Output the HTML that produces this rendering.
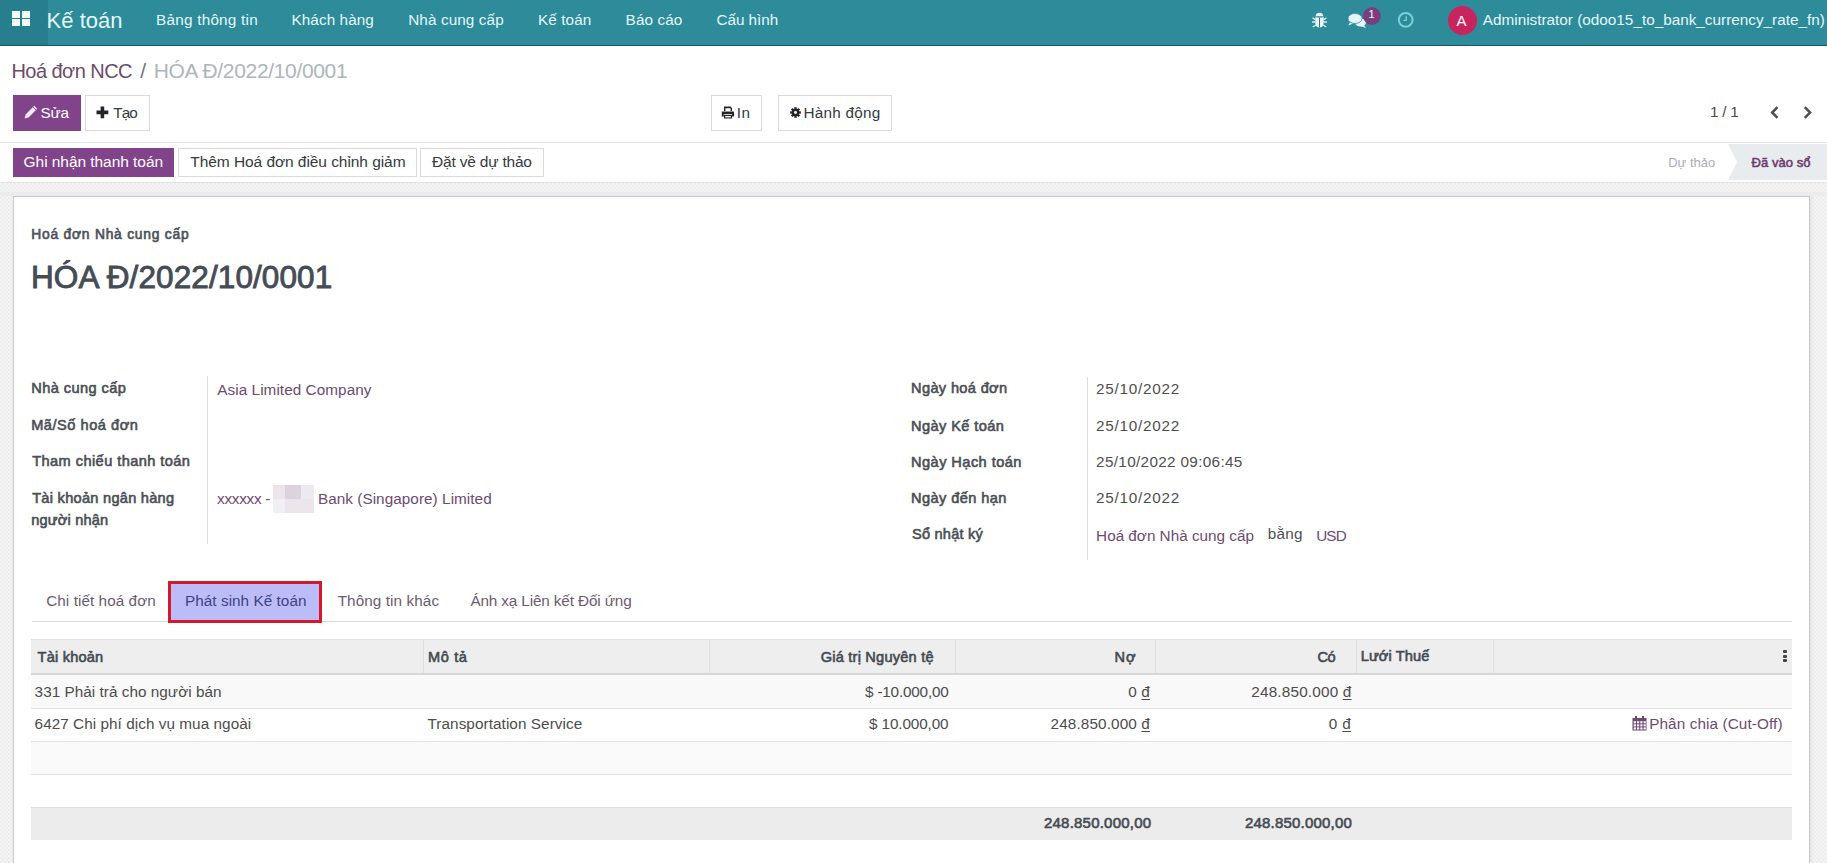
<!DOCTYPE html><html><head><meta charset='utf-8'><title>Odoo</title><style>
*{box-sizing:border-box}
html,body{margin:0;padding:0;width:1827px;height:863px;overflow:hidden;background:#fff;font-family:'Liberation Sans',sans-serif}
.t{position:absolute;white-space:nowrap;line-height:1;font-family:'Liberation Sans',sans-serif}
.r{position:absolute}
.t u{text-decoration:underline;text-underline-offset:2px}
</style></head><body><div class='r' style='left:0px;top:0px;width:1827px;height:45px;background:#2d8b9a'></div>
<div class='r' style='left:0px;top:45px;width:1827px;height:1px;background:#1d5660'></div>
<div class='r' style='left:0px;top:0px;width:48px;height:45px;background:#277f8e'></div>
<div class='r' style='left:12px;top:11px;width:8px;height:7px;background:#f2fbfc'></div>
<div class='r' style='left:22px;top:11px;width:8px;height:7px;background:#f2fbfc'></div>
<div class='r' style='left:12px;top:19px;width:8px;height:7px;background:#f2fbfc'></div>
<div class='r' style='left:22px;top:19px;width:8px;height:7px;background:#f2fbfc'></div>
<svg class='r' style='left:1311px;top:12px' width='17' height='17' viewBox='0 0 17 17'>
<g fill='#e6f6f8'><path d='M4.6 4.6 A3.9 3.9 0 0 1 12.4 4.6 Z'/><path d='M4.3 5.3 H12.7 V11 A4.2 4.6 0 0 1 4.3 11 Z'/>
<path d='M1 9.3 H4.5 V10.7 H1Z'/><path d='M16 9.3 H12.5 V10.7 H16Z'/>
<path d='M1.8 5.2 L4.8 7.3 L4.2 8.4 L1.2 6.3Z'/><path d='M15.2 5.2 L12.2 7.3 L12.8 8.4 L15.8 6.3Z'/>
<path d='M1.4 14.6 L4.6 12.6 L5 13.7 L2 15.6Z'/><path d='M15.6 14.6 L12.4 12.6 L12 13.7 L15 15.6Z'/></g>
<rect x='8.05' y='5.6' width='0.9' height='9.8' fill='#35606a'/><rect x='5.5' y='4.6' width='6' height='0.7' fill='#35606a'/></svg>
<svg class='r' style='left:1347px;top:12px' width='21' height='17' viewBox='0 0 21 17'>
<g fill='#e6f6f8'><ellipse cx='8' cy='6.5' rx='7' ry='5'/><path d='M3 10 L1.5 13.5 L7 11Z'/>
<ellipse cx='13.5' cy='10.5' rx='5.5' ry='4'/><path d='M17 13 L19 16 L13.5 14Z'/></g>
<ellipse cx='8' cy='6.5' rx='7' ry='5' fill='#e6f6f8' stroke='#2d8b9a' stroke-width='0.8'/></svg>
<div class='r' style='left:1363px;top:6.5px;width:18px;height:18px;background:#7a3e80;border-radius:50%'></div>
<span class='t' style='left:1368.5px;top:8.5px;font-size:11px;color:#fff'>1</span>
<svg class='r' style='left:1396px;top:10px' width='20' height='20' viewBox='0 0 20 20'>
<circle cx='9.7' cy='9.8' r='6.9' fill='none' stroke='#7ccfd8' stroke-width='2'/>
<path d='M10.2 6.2 V10.4 H7.6' fill='none' stroke='#7ccfd8' stroke-width='1.3'/></svg>
<div class='r' style='left:1448px;top:5.5px;width:29px;height:29px;background:#c8245e;border-radius:50%'></div>
<span class='t' style='left:1456.5px;top:13px;font-size:15px;color:#fff'>A</span>
<div class='r' style='left:13px;top:95px;width:68px;height:36px;background:#81438a'></div>
<div class='r' style='left:85px;top:95px;width:65px;height:36px;background:#fff;border:1px solid #dadada'></div>
<div class='r' style='left:711px;top:95px;width:51px;height:36px;background:#fff;border:1px solid #dadada'></div>
<div class='r' style='left:778px;top:95px;width:114px;height:36px;background:#fff;border:1px solid #dadada'></div>
<svg class='r' style='left:23px;top:104px' width='16' height='16' viewBox='0 0 16 16'>
<path d='M11.2 1.8 L14.2 4.8 L5.6 13.4 L1.6 14.4 L2.6 10.4 Z' fill='#f3e9f3'/>
<path d='M10 3 L13 6' stroke='#81438a' stroke-width='0.9'/></svg>
<svg class='r' style='left:96px;top:106px' width='13' height='13' viewBox='0 0 13 13'>
<path d='M4.6 0.5 H8.2 V4.6 H12.3 V8.2 H8.2 V12.3 H4.6 V8.2 H0.5 V4.6 H4.6Z' fill='#212529'/></svg>
<svg class='r' style='left:721px;top:106px' width='14' height='13' viewBox='0 0 14 13'>
<g fill='#212529'><path d='M3 0.5 H9.5 L11 2 V5 H9.6 V2.2 H4.4 V5 H3Z'/><path d='M0.8 5.5 H13 V10.5 H11 V8 H2.8 V10.5 H0.8Z'/>
<rect x='3' y='8.8' width='8' height='3.7'/></g><rect x='4.2' y='10' width='5.6' height='1.4' fill='#fff'/></svg>
<svg class='r' style='left:789.5px;top:107px' width='11' height='11' viewBox='0 0 12 12'>
<g transform='translate(6,6)' fill='#212529'>
<circle r='4'/><rect x='-1.3' y='-5.8' width='2.6' height='3' transform='rotate(0)'/><rect x='-1.3' y='-5.8' width='2.6' height='3' transform='rotate(45)'/><rect x='-1.3' y='-5.8' width='2.6' height='3' transform='rotate(90)'/><rect x='-1.3' y='-5.8' width='2.6' height='3' transform='rotate(135)'/><rect x='-1.3' y='-5.8' width='2.6' height='3' transform='rotate(180)'/><rect x='-1.3' y='-5.8' width='2.6' height='3' transform='rotate(225)'/><rect x='-1.3' y='-5.8' width='2.6' height='3' transform='rotate(270)'/><rect x='-1.3' y='-5.8' width='2.6' height='3' transform='rotate(315)'/></g><circle cx='6' cy='6' r='1.6' fill='#fff'/></svg>
<svg class='r' style='left:1768px;top:104px' width='14' height='17' viewBox='0 0 14 17'>
<path d='M9.5 3.2 L4.2 8.5 L9.5 13.8' fill='none' stroke='#4f4f4f' stroke-width='2.5'/></svg>
<svg class='r' style='left:1801px;top:104px' width='14' height='17' viewBox='0 0 14 17'>
<path d='M3.8 3.2 L9.1 8.5 L3.8 13.8' fill='none' stroke='#4f4f4f' stroke-width='2.5'/></svg>
<div class='r' style='left:0px;top:142px;width:1827px;height:1px;background:#dfe3e6'></div>
<div class='r' style='left:0px;top:182px;width:1827px;height:1px;background:#dfe3e6'></div>
<div class='r' style='left:13px;top:148px;width:161px;height:29px;background:#81438a'></div>
<div class='r' style='left:178px;top:148px;width:239px;height:29px;background:#fff;border:1px solid #dadada'></div>
<div class='r' style='left:420px;top:148px;width:124px;height:29px;background:#fff;border:1px solid #dadada'></div>
<svg class='r' style='left:1700px;top:143px' width='127' height='39' viewBox='0 0 127 39'>
<path d='M28 1 H127 V37 H28 L37 19 Z' fill='#e9ecef'/></svg>
<div class='r' style='left:0px;top:183px;width:1827px;height:680px;background-color:#f0f0f1;background-image:repeating-conic-gradient(#ececed 0 25%,#f5f5f6 0 50%);background-size:4px 4px'></div>
<div class='r' style='left:0px;top:192px;width:1827px;height:4px;background:#ececee'></div>
<div class='r' style='left:13px;top:196px;width:1797px;height:700px;background:#fff;border:1px solid #c9c9cb;box-shadow:3px 0 2px rgba(0,0,0,0.035)'></div>
<div class='r' style='left:207px;top:376px;width:1px;height:168px;background:#dcdcdc'></div>
<div class='r' style='left:1087px;top:377px;width:1px;height:183px;background:#dcdcdc'></div>
<div class='r' style='left:273px;top:485px;width:41px;height:28px;background:#ece6ec'>
<div class='r' style='left:12px;top:0;width:16px;height:14px;background:#ddd2de'></div>
<div class='r' style='left:0;top:14px;width:12px;height:14px;background:#f2eff2'></div>
<div class='r' style='left:28px;top:0;width:13px;height:14px;background:#eee9ee'></div>
</div>
<div class='r' style='left:32px;top:621px;width:1760px;height:1px;background:#dadada'></div>
<div class='r' style='left:168px;top:581px;width:154px;height:42px;background:#bcbcf8;border:3px solid #d5192b'></div>
<div class='r' style='left:31px;top:639px;width:1761px;height:36px;background:#eeeeee;border-top:1px solid #e2e2e2;border-bottom:2px solid #d7d7d7'></div>
<div class='r' style='left:422.5px;top:640px;width:1px;height:33px;background:#e0e0e0'></div>
<div class='r' style='left:709px;top:640px;width:1px;height:33px;background:#e0e0e0'></div>
<div class='r' style='left:954.5px;top:640px;width:1px;height:33px;background:#e0e0e0'></div>
<div class='r' style='left:1155px;top:640px;width:1px;height:33px;background:#e0e0e0'></div>
<div class='r' style='left:1356px;top:640px;width:1px;height:33px;background:#e0e0e0'></div>
<div class='r' style='left:1492.5px;top:640px;width:1px;height:33px;background:#e0e0e0'></div>
<div class='r' style='left:31px;top:675px;width:1761px;height:33px;background:#f9f9f9'></div>
<div class='r' style='left:31px;top:708px;width:1761px;height:1px;background:#e1e1e1'></div>
<div class='r' style='left:31px;top:741px;width:1761px;height:1px;background:#e1e1e1'></div>
<div class='r' style='left:31px;top:742px;width:1761px;height:32px;background:#fafafa'></div>
<div class='r' style='left:31px;top:774px;width:1761px;height:1px;background:#e1e1e1'></div>
<div class='r' style='left:31px;top:807px;width:1761px;height:33px;background:#ececec;border-top:1px solid #dcdcdc'></div>
<div class='r' style='left:1783px;top:650px;width:3.5px;height:3px;background:#3f444a;border-radius:1px'></div>
<div class='r' style='left:1783px;top:654.5px;width:3.5px;height:3px;background:#3f444a;border-radius:1px'></div>
<div class='r' style='left:1783px;top:659px;width:3.5px;height:3px;background:#3f444a;border-radius:1px'></div>
<svg class='r' style='left:1632px;top:716px' width='15' height='15' viewBox='0 0 15 15'>
<g fill='#6d4a72'><rect x='0.5' y='2' width='14' height='12.5'/></g>
<g fill='#fff'><rect x='1.7' y='5.2' width='2.2' height='2.1'/><rect x='5.0' y='5.2' width='2.2' height='2.1'/><rect x='8.3' y='5.2' width='2.2' height='2.1'/><rect x='11.6' y='5.2' width='2.2' height='2.1'/><rect x='1.7' y='8.3' width='2.2' height='2.1'/><rect x='5.0' y='8.3' width='2.2' height='2.1'/><rect x='8.3' y='8.3' width='2.2' height='2.1'/><rect x='11.6' y='8.3' width='2.2' height='2.1'/><rect x='1.7' y='11.4' width='2.2' height='2.1'/><rect x='5.0' y='11.4' width='2.2' height='2.1'/><rect x='8.3' y='11.4' width='2.2' height='2.1'/><rect x='11.6' y='11.4' width='2.2' height='2.1'/></g><g fill='#6d4a72'><rect x='3' y='0' width='2' height='3.5'/><rect x='10' y='0' width='2' height='3.5'/></g></svg>
<span class='t' style='left:46.60px;top:10.10px;font-size:22px;font-weight:400;color:#e4f7f9;letter-spacing:0.017px;'>Kế toán</span>
<span class='t' style='left:156.10px;top:11.89px;font-size:15.3px;font-weight:400;color:#e4f7f9;letter-spacing:0.223px;'>Bảng thông tin</span>
<span class='t' style='left:291.50px;top:11.89px;font-size:15.3px;font-weight:400;color:#e4f7f9;letter-spacing:0.078px;'>Khách hàng</span>
<span class='t' style='left:408.20px;top:11.89px;font-size:15.3px;font-weight:400;color:#e4f7f9;letter-spacing:0.100px;'>Nhà cung cấp</span>
<span class='t' style='left:538.00px;top:11.89px;font-size:15.3px;font-weight:400;color:#e4f7f9;letter-spacing:0.083px;'>Kế toán</span>
<span class='t' style='left:625.60px;top:11.89px;font-size:15.3px;font-weight:400;color:#e4f7f9;letter-spacing:0.100px;'>Báo cáo</span>
<span class='t' style='left:716.50px;top:11.89px;font-size:15.3px;font-weight:400;color:#e4f7f9;letter-spacing:-0.057px;'>Cấu hình</span>
<span class='t' style='left:1482.80px;top:11.79px;font-size:15.3px;font-weight:400;color:#e4f7f9;letter-spacing:0.004px;'>Administrator (odoo15_to_bank_currency_rate_fn)</span>
<span class='t' style='left:11.40px;top:60.60px;font-size:20px;font-weight:400;color:#6b4b6b;letter-spacing:-0.540px;'>Hoá đơn NCC</span>
<span class='t' style='left:140.30px;top:59.75px;font-size:21px;font-weight:400;color:#6c757d;letter-spacing:0.000px;'>/</span>
<span class='t' style='left:153.70px;top:59.75px;font-size:21px;font-weight:400;color:#adb5bd;letter-spacing:-0.335px;'>HÓA Đ/2022/10/0001</span>
<span class='t' style='left:40.40px;top:105.00px;font-size:15.3px;font-weight:400;color:#ffffff;letter-spacing:-0.200px;'>Sửa</span>
<span class='t' style='left:113.30px;top:105.00px;font-size:15.3px;font-weight:400;color:#343a40;letter-spacing:-1.000px;'>Tạo</span>
<span class='t' style='left:736.80px;top:104.59px;font-size:15.3px;font-weight:400;color:#343a40;letter-spacing:0.500px;'>In</span>
<span class='t' style='left:803.50px;top:104.59px;font-size:15.3px;font-weight:400;color:#343a40;letter-spacing:0.250px;'>Hành động</span>
<span class='t' style='left:1710.00px;top:104.00px;font-size:15.3px;font-weight:400;color:#4c4c4c;letter-spacing:-0.225px;'>1 / 1</span>
<span class='t' style='left:23.60px;top:153.52px;font-size:15.5px;font-weight:400;color:#ffffff;letter-spacing:-0.056px;'>Ghi nhận thanh toán</span>
<span class='t' style='left:190.30px;top:153.52px;font-size:15.5px;font-weight:400;color:#343a40;letter-spacing:-0.063px;'>Thêm Hoá đơn điều chỉnh giảm</span>
<span class='t' style='left:432.10px;top:153.52px;font-size:15.5px;font-weight:400;color:#343a40;letter-spacing:-0.208px;'>Đặt về dự thảo</span>
<span class='t' style='left:1668.20px;top:155.65px;font-size:13px;font-weight:400;color:#a9adb1;letter-spacing:0.000px;'>Dự thảo</span>
<span class='t' style='left:1751.60px;top:155.65px;font-size:13px;font-weight:400;color:#6f3a6f;letter-spacing:0.050px;-webkit-text-stroke-width:0.55px'>Đã vào sổ</span>
<span class='t' style='left:31.30px;top:228.17px;font-size:13.8px;font-weight:400;color:#4c535b;letter-spacing:0.779px;-webkit-text-stroke-width:0.65px'>Hoá đơn Nhà cung cấp</span>
<span class='t' style='left:31.00px;top:262.23px;font-size:31.5px;font-weight:400;color:#454c56;letter-spacing:0.106px;-webkit-text-stroke-width:0.9px'>HÓA Đ/2022/10/0001</span>
<span class='t' style='left:31.20px;top:381.19px;font-size:14.6px;font-weight:400;color:#4a4f55;letter-spacing:0.427px;-webkit-text-stroke-width:0.6px'>Nhà cung cấp</span>
<span class='t' style='left:31.20px;top:417.99px;font-size:14.6px;font-weight:400;color:#4a4f55;letter-spacing:0.517px;-webkit-text-stroke-width:0.6px'>Mã/Số hoá đơn</span>
<span class='t' style='left:32.20px;top:454.39px;font-size:14.6px;font-weight:400;color:#4a4f55;letter-spacing:0.425px;-webkit-text-stroke-width:0.6px'>Tham chiếu thanh toán</span>
<span class='t' style='left:32.20px;top:491.09px;font-size:14.6px;font-weight:400;color:#4a4f55;letter-spacing:0.267px;-webkit-text-stroke-width:0.6px'>Tài khoản ngân hàng</span>
<span class='t' style='left:31.20px;top:512.99px;font-size:14.6px;font-weight:400;color:#4a4f55;letter-spacing:0.189px;-webkit-text-stroke-width:0.6px'>người nhận</span>
<span class='t' style='left:217.30px;top:381.80px;font-size:15.3px;font-weight:400;color:#6d4a72;letter-spacing:0.058px;'>Asia Limited Company</span>
<span class='t' style='left:217.00px;top:491.30px;font-size:15.3px;font-weight:400;color:#6d4a72;letter-spacing:-0.257px;'>xxxxxx -</span>
<span class='t' style='left:317.90px;top:491.30px;font-size:15.3px;font-weight:400;color:#6d4a72;letter-spacing:0.052px;'>Bank (Singapore) Limited</span>
<span class='t' style='left:911.10px;top:381.49px;font-size:14.6px;font-weight:400;color:#4a4f55;letter-spacing:0.336px;-webkit-text-stroke-width:0.6px'>Ngày hoá đơn</span>
<span class='t' style='left:911.10px;top:418.59px;font-size:14.6px;font-weight:400;color:#4a4f55;letter-spacing:0.391px;-webkit-text-stroke-width:0.6px'>Ngày Kế toán</span>
<span class='t' style='left:911.10px;top:454.59px;font-size:14.6px;font-weight:400;color:#4a4f55;letter-spacing:0.431px;-webkit-text-stroke-width:0.6px'>Ngày Hạch toán</span>
<span class='t' style='left:911.10px;top:490.59px;font-size:14.6px;font-weight:400;color:#4a4f55;letter-spacing:0.391px;-webkit-text-stroke-width:0.6px'>Ngày đến hạn</span>
<span class='t' style='left:912.10px;top:526.79px;font-size:14.6px;font-weight:400;color:#4a4f55;letter-spacing:0.189px;-webkit-text-stroke-width:0.6px'>Sổ nhật ký</span>
<span class='t' style='left:1096.10px;top:381.19px;font-size:15.3px;font-weight:400;color:#4f4f4f;letter-spacing:0.744px;'>25/10/2022</span>
<span class='t' style='left:1096.10px;top:418.19px;font-size:15.3px;font-weight:400;color:#4f4f4f;letter-spacing:0.744px;'>25/10/2022</span>
<span class='t' style='left:1096.10px;top:454.19px;font-size:15.3px;font-weight:400;color:#4f4f4f;letter-spacing:0.328px;'>25/10/2022 09:06:45</span>
<span class='t' style='left:1096.10px;top:490.19px;font-size:15.3px;font-weight:400;color:#4f4f4f;letter-spacing:0.744px;'>25/10/2022</span>
<span class='t' style='left:1096.10px;top:528.20px;font-size:15.3px;font-weight:400;color:#6d4a72;letter-spacing:-0.011px;'>Hoá đơn Nhà cung cấp</span>
<span class='t' style='left:1267.80px;top:526.20px;font-size:15.3px;font-weight:400;color:#4f4f4f;letter-spacing:0.200px;'>bằng</span>
<span class='t' style='left:1316.20px;top:528.20px;font-size:15.3px;font-weight:400;color:#6d4a72;letter-spacing:-0.900px;'>USD</span>
<span class='t' style='left:46.20px;top:592.89px;font-size:15.3px;font-weight:400;color:#6c5b72;letter-spacing:0.060px;'>Chi tiết hoá đơn</span>
<span class='t' style='left:185.00px;top:592.89px;font-size:15.3px;font-weight:400;color:#3f4185;letter-spacing:0.044px;'>Phát sinh Kế toán</span>
<span class='t' style='left:337.70px;top:592.89px;font-size:15.3px;font-weight:400;color:#6c5b72;letter-spacing:0.077px;'>Thông tin khác</span>
<span class='t' style='left:470.40px;top:592.89px;font-size:15.3px;font-weight:400;color:#6c5b72;letter-spacing:-0.132px;'>Ánh xạ Liên kết Đối ứng</span>
<span class='t' style='left:37.60px;top:649.59px;font-size:14.6px;font-weight:400;color:#454b52;letter-spacing:0.188px;-webkit-text-stroke-width:0.6px'>Tài khoản</span>
<span class='t' style='left:428.00px;top:649.59px;font-size:14.6px;font-weight:400;color:#454b52;letter-spacing:0.600px;-webkit-text-stroke-width:0.6px'>Mô tả</span>
<span class='t' style='left:820.70px;top:649.59px;font-size:14.6px;font-weight:400;color:#454b52;letter-spacing:0.212px;-webkit-text-stroke-width:0.6px'>Giá trị Nguyên tệ</span>
<span class='t' style='left:1114.50px;top:649.59px;font-size:14.6px;font-weight:400;color:#454b52;letter-spacing:1.000px;-webkit-text-stroke-width:0.6px'>Nợ</span>
<span class='t' style='left:1317.50px;top:649.59px;font-size:14.6px;font-weight:400;color:#454b52;letter-spacing:-0.500px;-webkit-text-stroke-width:0.6px'>Có</span>
<span class='t' style='left:1360.80px;top:648.59px;font-size:14.6px;font-weight:400;color:#454b52;letter-spacing:0.088px;-webkit-text-stroke-width:0.6px'>Lưới Thuế</span>
<span class='t' style='left:34.60px;top:683.70px;font-size:15.3px;font-weight:400;color:#4c4c4c;letter-spacing:0.032px;'>331 Phải trả cho người bán</span>
<span class='t' style='left:865.00px;top:683.70px;font-size:15.3px;font-weight:400;color:#4c4c4c;letter-spacing:-0.191px;'>$ -10.000,00</span>
<span class='t' style='left:1128.20px;top:683.70px;font-size:15.3px;font-weight:400;color:#4c4c4c;letter-spacing:0.200px;'>0 <u>đ</u></span>
<span class='t' style='left:1251.30px;top:683.70px;font-size:15.3px;font-weight:400;color:#4c4c4c;letter-spacing:0.183px;'>248.850.000 <u>đ</u></span>
<span class='t' style='left:34.60px;top:716.00px;font-size:15.3px;font-weight:400;color:#4c4c4c;letter-spacing:0.048px;'>6427 Chi phí dịch vụ mua ngoài</span>
<span class='t' style='left:427.50px;top:716.00px;font-size:15.3px;font-weight:400;color:#4c4c4c;letter-spacing:0.067px;'>Transportation Service</span>
<span class='t' style='left:869.10px;top:716.00px;font-size:15.3px;font-weight:400;color:#4c4c4c;letter-spacing:-0.140px;'>$ 10.000,00</span>
<span class='t' style='left:1050.50px;top:716.00px;font-size:15.3px;font-weight:400;color:#4c4c4c;letter-spacing:0.125px;'>248.850.000 <u>đ</u></span>
<span class='t' style='left:1328.80px;top:716.00px;font-size:15.3px;font-weight:400;color:#4c4c4c;letter-spacing:0.350px;'>0 <u>đ</u></span>
<span class='t' style='left:1649.20px;top:716.00px;font-size:15.3px;font-weight:400;color:#6d4a72;letter-spacing:0.100px;'>Phân chia (Cut-Off)</span>
<span class='t' style='left:1044.00px;top:815.15px;font-size:15px;font-weight:400;color:#454b52;letter-spacing:0.215px;-webkit-text-stroke-width:0.6px'>248.850.000,00</span>
<span class='t' style='left:1245.00px;top:815.15px;font-size:15px;font-weight:400;color:#454b52;letter-spacing:0.192px;-webkit-text-stroke-width:0.6px'>248.850.000,00</span></body></html>
